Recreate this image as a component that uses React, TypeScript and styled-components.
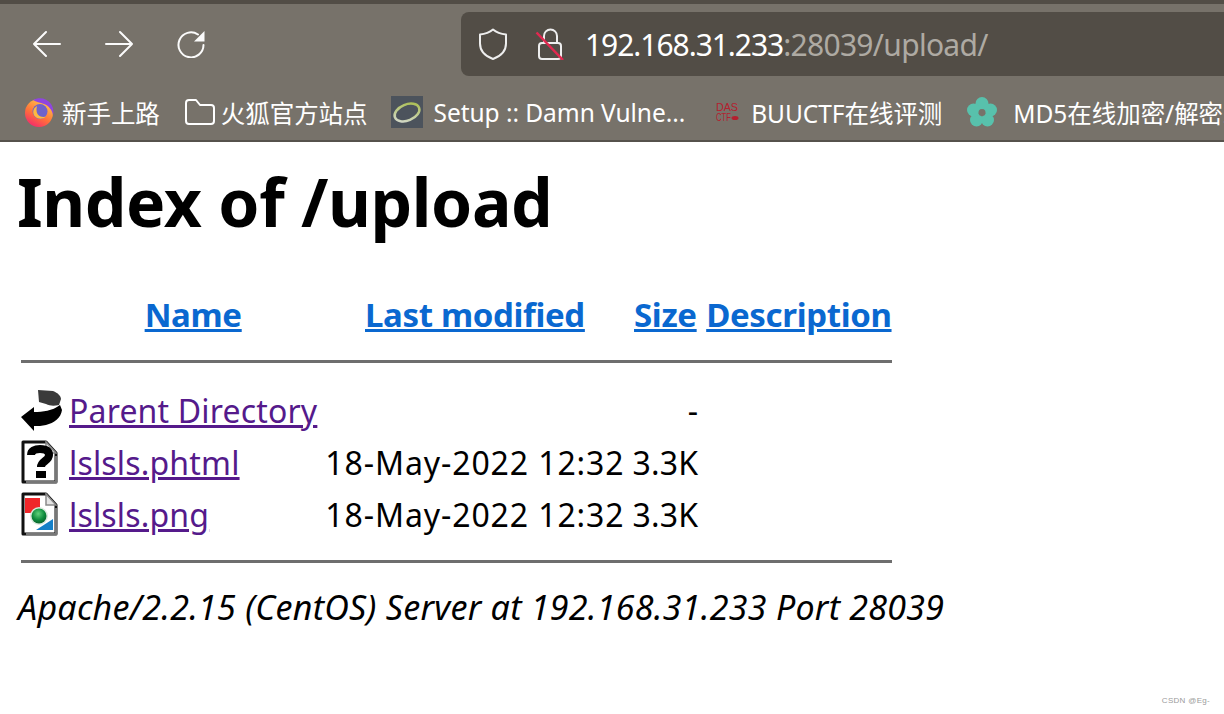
import styled, { createGlobalStyle } from "styled-components";
import { ReactNode } from "react";

const GlobalStyle = createGlobalStyle`
    html, body {
        margin: 0;
        padding: 0;
        background: #ffffff;
    }
    body {
        font-family: "Noto Sans", "Noto Sans CJK SC", sans-serif;
    }
`;

const Page = styled.div`
    position: relative;
    width: 1224px;
    height: 714px;
    overflow: hidden;
`;

const Chrome = styled.div`
    display: flex;
    flex-direction: column;
    height: 142px;
    box-sizing: border-box;
    background: #77726a;
    border-top: 4px solid #524d46;
    border-bottom: 2px solid #56524c;
`;

const Toolbar = styled.div`
    display: flex;
    align-items: center;
    height: 80px;
    padding-left: 33px;
    box-sizing: border-box;
`;

const NavButton = styled.div`
    width: 28px;
    height: 28px;
    margin-right: 44px;
    color: #fbfbfb;
`;

const UrlBar = styled.div`
    display: flex;
    align-items: center;
    flex-shrink: 0;
    width: 763px;
    height: 64px;
    margin-left: 212px;
    padding-left: 16px;
    box-sizing: border-box;
    background: #524d46;
    border-radius: 8px 0 0 8px;
`;

const UrlIcon = styled.div<{ $gap: number }>`
    width: 32px;
    height: 32px;
    margin-right: ${(p) => p.$gap}px;
    color: #eeeeee;
`;

const UrlText = styled.div`
    font-size: 30px;
    letter-spacing: -1.05px;
    color: #ffffff;
    white-space: nowrap;
`;

const UrlMuted = styled.span`
    letter-spacing: -0.7px;
    color: #aeaaa3;
`;

const BookmarkBar = styled.div`
    display: flex;
    align-items: center;
    height: 56px;
    overflow: hidden;
    padding-left: 24px;
`;

const Bookmark = styled.div<{ $gap: number; $iconGap: number }>`
    display: flex;
    align-items: center;
    flex-shrink: 0;
    gap: ${(p) => p.$iconGap}px;
    margin-right: ${(p) => p.$gap}px;
    font-size: 24.5px;
    letter-spacing: -0.05px;
    color: #ffffff;
    white-space: nowrap;
`;

const Content = styled.main`
    padding-left: 18px;
    color: #000000;
`;

const Title = styled.h1`
    margin: 19px 0 0 -1px;
    font-size: 66px;
    line-height: 80px;
    font-weight: 700;
    letter-spacing: -0.4px;
`;

const Listing = styled.table`
    margin-top: 45px;
    border-spacing: 3px 0;
    border-collapse: separate;
    font-size: 32px;
`;

const HeadCell = styled.th`
    padding: 0 0 0 5px;
    height: 56px;
    text-align: center;
    font-size: 33px;
    font-weight: 700;
    letter-spacing: -0.35px;
    a {
        color: #0a68d0;
    }
`;

const Cell = styled.td<{ $right?: boolean; $wide?: boolean }>`
    height: 52px;
    padding: 0 0 0 5px;
    white-space: nowrap;
    text-align: ${(p) => (p.$right ? "right" : "left")};
    letter-spacing: ${(p) => (p.$wide ? "0.9px" : "0.17px")};
    a {
        color: #551a8b;
    }
`;

const IconCell = styled.td`
    height: 52px;
    padding: 0;
    width: 40px;
    vertical-align: middle;
    line-height: 0;
`;

const RuleCell = styled.th<{ $above: number; $below: number }>`
    padding: ${(p) => p.$above}px 0 ${(p) => p.$below}px;
    font-weight: 400;
`;

const Rule = styled.div`
    height: 3px;
    background: #6e6e6e;
`;

const Footer = styled.address`
    margin-top: 22px;
    font-size: 34px;
    font-style: italic;
    letter-spacing: 0.27px;
    line-height: 44px;
    white-space: nowrap;
`;

const Watermark = styled.div`
    position: absolute;
    right: 14px;
    bottom: 9px;
    font-family: "Liberation Sans", sans-serif;
    font-size: 8px;
    letter-spacing: 0.3px;
    color: #9b9b9b;
`;

const LogoText = styled.text`
    font-family: "Liberation Sans", sans-serif;
    font-size: 11px;
    fill: #b5202f;
`;

function BackIcon() {
    return (
        <svg viewBox="0 0 28 28" width="28" height="28" fill="none" stroke="currentColor" strokeWidth="2" strokeLinecap="round" strokeLinejoin="round">
            <path d="M1 14h26M13 2L1 14l12 12" />
        </svg>
    );
}

function ForwardIcon() {
    return (
        <svg viewBox="0 0 28 28" width="28" height="28" fill="none" stroke="currentColor" strokeWidth="2" strokeLinecap="round" strokeLinejoin="round">
            <path d="M1 14h26M15 2l12 12-12 12" />
        </svg>
    );
}

function ReloadIcon() {
    return (
        <svg viewBox="0 0 28 28" width="28" height="28" fill="none">
            <path d="M26.500 15A12.500 12.500 0 1 1 21 4.500" stroke="currentColor" strokeWidth="2" strokeLinecap="round" />
            <path d="M27.500 1v10.500H17z" fill="currentColor" />
        </svg>
    );
}

function ShieldIcon() {
    return (
        <svg viewBox="0 0 32 32" width="32" height="32" fill="none" stroke="currentColor" strokeWidth="2" strokeLinejoin="round">
            <path d="M16 1.500c3 2.500 8 4.500 13 5v9c0 8-6 13-13 15.500C9 28.500 3 23.500 3 15.500v-9c5-.5 10-2.500 13-5z" />
        </svg>
    );
}

function InsecureLockIcon() {
    return (
        <svg viewBox="0 0 32 32" width="32" height="32" fill="none">
            <rect x="6" y="15" width="22" height="16" rx="3" stroke="currentColor" strokeWidth="2" />
            <path d="M11 15V8a6.500 6.500 0 0 1 13 0v7" stroke="currentColor" strokeWidth="2" />
            <path d="M3.500 4.500L30 32" stroke="#e22850" strokeWidth="2.500" />
        </svg>
    );
}

function FirefoxLogo() {
    return (
        <svg viewBox="0 0 30 30" width="30" height="30">
            <defs>
                <linearGradient id="fxBody" x1="0.75" y1="0.1" x2="0.25" y2="1">
                    <stop offset="0" stopColor="#ffc54a" />
                    <stop offset="0.55" stopColor="#ff7139" />
                    <stop offset="1" stopColor="#f2276e" />
                </linearGradient>
            </defs>
            <circle cx="15" cy="16" r="14" fill="url(#fxBody)" />
            <path d="M9 3c6-3.500 14-2 18 4 2 3 3 7 2 11-1-5-4-9-9-11-4-1.500-8-2-11-4z" fill="#8f45e0" />
            <circle cx="16" cy="14.500" r="7.500" fill="#6f63c9" />
            <path d="M13 9c-4 2-5 7-2 10.500 3 3 8 3 11 0-3 1-7 0-8.500-2.500-1.500-2.500-1-6-.5-8z" fill="#ffb93f" />
        </svg>
    );
}

function FolderIcon() {
    return (
        <svg viewBox="0 0 30 30" width="30" height="30" fill="none" stroke="currentColor" strokeWidth="2" strokeLinejoin="round">
            <path d="M1 6a3 3 0 0 1 3-3h7l4 5h11a3 3 0 0 1 3 3v13a3 3 0 0 1-3 3H4a3 3 0 0 1-3-3z" />
        </svg>
    );
}

function DvwaLogo() {
    return (
        <svg viewBox="0 0 32 32" width="32" height="32">
            <defs>
                <linearGradient id="dvwaRing" x1="0" y1="1" x2="1" y2="0">
                    <stop offset="0" stopColor="#d8dcd8" />
                    <stop offset="1" stopColor="#a6bb45" />
                </linearGradient>
            </defs>
            <rect width="32" height="32" fill="#4c535c" />
            <ellipse cx="16" cy="16.500" rx="13" ry="8" transform="rotate(-22 16 16.500)" fill="none" stroke="url(#dvwaRing)" strokeWidth="2.500" />
        </svg>
    );
}

function DasLogo() {
    return (
        <svg viewBox="0 0 32 32" width="32" height="32">
            <LogoText x="7" y="15" textLength="22" lengthAdjust="spacingAndGlyphs">DAS</LogoText>
            <LogoText x="7" y="25" textLength="15" lengthAdjust="spacingAndGlyphs">CTF</LogoText>
            <ellipse cx="26" cy="22" rx="3.500" ry="2" fill="#b5202f" />
        </svg>
    );
}

function FlowerLogo() {
    return (
        <svg viewBox="0 0 32 32" width="32" height="32">
            <g fill="#58c1ac">
                <circle cx="16" cy="7.500" r="6.500" />
                <circle cx="24.500" cy="14" r="6.500" />
                <circle cx="21.500" cy="24" r="6.500" />
                <circle cx="10.500" cy="24" r="6.500" />
                <circle cx="7.500" cy="14" r="6.500" />
            </g>
            <circle cx="16" cy="16.500" r="3.500" fill="#77726a" />
        </svg>
    );
}

function BackFileIcon() {
    return (
        <svg viewBox="0 0 40 44" width="40" height="44" style={{ overflow: "visible" }}>
            <path d="M17 2l15 1c5 2 8 5 8 8l-2 6c-5 1-9 1-13-1l-7-2z" fill="#3a3a3a" />
            <path d="M0 29l13-10v5c9 0 18-1 26-7l2 5c-1 8-8 13-16 15-4 1-8 1-12 1v5z" fill="#000000" />
        </svg>
    );
}

function PageOutline() {
    return (
        <>
            <path d="M2 2h23l10 11v29H2z" fill="#ffffff" stroke="#111111" strokeWidth="3" strokeLinejoin="round" />
            <path d="M25 2v11h10z" fill="#e4e4e4" stroke="#8a8a8a" strokeWidth="1.500" />
            <path d="M35 16v26H5" fill="none" stroke="#777777" strokeWidth="2" />
        </>
    );
}

function UnknownFileIcon() {
    return (
        <svg viewBox="0 0 40 44" width="40" height="44">
            <PageOutline />
            <path d="M10 15c0-4 4-6 9-6 6 0 9 2 9 6 0 6-8 6-8 12" fill="none" stroke="#000000" strokeWidth="8" />
            <path d="M15 31h10v7H15z" fill="#000000" />
        </svg>
    );
}

function ImageFileIcon() {
    return (
        <svg viewBox="0 0 40 44" width="40" height="44">
            <defs>
                <radialGradient id="greenBall" cx="0.45" cy="0.35" r="0.7">
                    <stop offset="0" stopColor="#5fd07a" />
                    <stop offset="0.6" stopColor="#0d8a3c" />
                    <stop offset="1" stopColor="#0a5c2a" />
                </radialGradient>
            </defs>
            <PageOutline />
            <path d="M4 6h15v15H4z" fill="#f0262a" />
            <path d="M32 27v11H15z" fill="#1580c8" />
            <circle cx="18" cy="24" r="9" fill="#d8e8dc" />
            <circle cx="18" cy="24" r="7.500" fill="url(#greenBall)" />
        </svg>
    );
}

const rows: { icon: ReactNode; name: string; date: string; size: string }[] = [
    { icon: <BackFileIcon />, name: "Parent Directory", date: "", size: "-" },
    { icon: <UnknownFileIcon />, name: "lslsls.phtml", date: "18-May-2022 12:32", size: "3.3K" },
    { icon: <ImageFileIcon />, name: "lslsls.png", date: "18-May-2022 12:32", size: "3.3K" },
];

export default function App() {
    return (
        <Page>
            <GlobalStyle />
            <Chrome>
                <Toolbar>
                    <NavButton><BackIcon /></NavButton>
                    <NavButton><ForwardIcon /></NavButton>
                    <NavButton><ReloadIcon /></NavButton>
                    <UrlBar>
                        <UrlIcon $gap={24}><ShieldIcon /></UrlIcon>
                        <UrlIcon $gap={20}><InsecureLockIcon /></UrlIcon>
                        <UrlText>192.168.31.233<UrlMuted>:28039/upload/</UrlMuted></UrlText>
                    </UrlBar>
                </Toolbar>
                <BookmarkBar>
                    <Bookmark $gap={25} $iconGap={8}><FirefoxLogo />新手上路</Bookmark>
                    <Bookmark $gap={23} $iconGap={6}><FolderIcon />火狐官方站点</Bookmark>
                    <Bookmark $gap={24} $iconGap={11}><DvwaLogo />Setup :: Damn Vulne...</Bookmark>
                    <Bookmark $gap={24} $iconGap={10}><DasLogo />BUUCTF在线评测</Bookmark>
                    <Bookmark $gap={0} $iconGap={15}><FlowerLogo />MD5在线加密/解密工具</Bookmark>
                </BookmarkBar>
            </Chrome>
            <Content>
                <Title>Index of /upload</Title>
                <Listing>
                    <thead>
                        <tr>
                            <HeadCell />
                            <HeadCell><a href="#name">Name</a></HeadCell>
                            <HeadCell><a href="#modified">Last modified</a></HeadCell>
                            <HeadCell><a href="#size">Size</a></HeadCell>
                            <HeadCell><a href="#description">Description</a></HeadCell>
                        </tr>
                        <tr>
                            <RuleCell colSpan={5} $above={18} $below={21}><Rule /></RuleCell>
                        </tr>
                    </thead>
                    <tbody>
                        {rows.map((row) => (
                            <tr key={row.name}>
                                <IconCell>{row.icon}</IconCell>
                                <Cell><a href="#file">{row.name}</a></Cell>
                                <Cell $wide>{row.date}</Cell>
                                <Cell $right>{row.size}</Cell>
                                <Cell />
                            </tr>
                        ))}
                        <tr>
                            <RuleCell colSpan={5} $above={20} $below={0}><Rule /></RuleCell>
                        </tr>
                    </tbody>
                </Listing>
                <Footer>Apache/2.2.15 (CentOS) Server at 192.168.31.233 Port 28039</Footer>
            </Content>
            <Watermark>CSDN @Eg-</Watermark>
        </Page>
    );
}
